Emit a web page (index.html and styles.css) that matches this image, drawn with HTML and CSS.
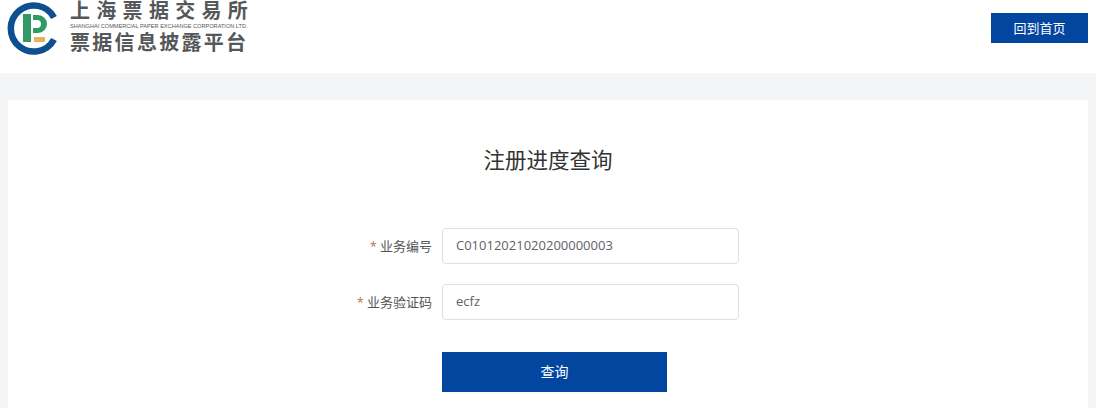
FILE: index.html
```html
<!DOCTYPE html>
<html lang="zh-CN">
<head>
    <meta charset="UTF-8">
    <title>注册进度查询</title>
    <link rel="stylesheet" href="styles.css">
</head>
<body>

    <div class="header">
        <div class="logo">
            <svg class="logo-mark" width="54" height="54" viewBox="0 0 54 54">
                <path d="M47 16.5A23 23 0 1 0 47 38.5" fill="none" stroke="#0d4f8f" stroke-width="6.5"/>
                <rect x="16" y="13" width="8" height="28" fill="#2f9a63"/>
                <path d="M26 14h5a9 9 0 0 1 0 18h-5v-5h4a4 4 0 0 0 0-8h-4z" fill="#2f9a63"/>
                <rect x="27" y="36" width="11" height="5" fill="#e3b35c"/>
            </svg>
            <div class="logo-text">
                <div class="logo-name">上海票据交易所</div>
                <div class="logo-en">SHANGHAI COMMERCIAL PAPER EXCHANGE CORPORATION LTD.</div>
                <div class="logo-sub">票据信息披露平台</div>
            </div>
        </div>
        <a class="home-btn">回到首页</a>
    </div>

    <div class="card">
        <h2>注册进度查询</h2>

        <div class="form-row">
            <label><span class="star">*</span>业务编号</label>
            <div class="input-box">C01012021020200000003</div>
        </div>

        <div class="form-row">
            <label><span class="star">*</span>业务验证码</label>
            <div class="input-box">ecfz</div>
        </div>

        <div class="btn-row">
            <button class="search-btn">查询</button>
        </div>
    </div>

</body>
</html>
```

FILE: styles.css
```css
body {
    font-family: "Open Sans", "Noto Sans CJK SC", sans-serif;
    margin: 0;
    padding: 0;
    background-color: #f3f5f6;
    height: 408px;
    overflow: hidden;
}

.header {
    display: flex;
    justify-content: space-between;
    align-items: flex-start;
    height: 73px;
    background: white;
    padding-right: 8px;
}

.logo {
    display: flex;
    padding-left: 7px;
}

.logo-mark {
    display: block;
    margin-top: 1px;
}

.logo-text {
    margin-left: 9px;
    width: 180px;
    font-family: "Liberation Sans", "Noto Sans CJK SC", sans-serif;
    color: #55585a;
    font-weight: bold;
    white-space: nowrap;
}

.logo-name {
    font-size: 20px;
    line-height: 23px;
    letter-spacing: 6.3px;
}

.logo-en {
    font-size: 5.6px;
    line-height: 7px;
    font-weight: normal;
}

.logo-sub {
    font-size: 20px;
    line-height: 23px;
    letter-spacing: 2.3px;
    margin-top: 2px;
}

.home-btn {
    display: block;
    width: 97px;
    height: 30px;
    line-height: 30px;
    margin-top: 13px;
    text-align: center;
    font-size: 13px;
    color: white;
    background-color: #03469f;
}

.card {
    background: white;
    margin: 27px 8px 0;
    height: 308px;
    overflow: hidden;
}

h2 {
    font-size: 21.5px;
    font-weight: normal;
    line-height: 30px;
    color: #333;
    text-align: center;
    margin: 45px 0 53px;
}

.form-row {
    display: flex;
    align-items: center;
    height: 36px;
    margin-bottom: 20px;
    font-size: 13px;
    color: #555;
}

label {
    width: 434px;
    text-align: right;
    padding: 0 10px 2px 0;
    box-sizing: border-box;
}

.star {
    margin-right: 3px;
    color: #c0705a;
}

.input-box {
    box-sizing: border-box;
    width: 297px;
    height: 36px;
    line-height: 32px;
    padding-left: 13px;
    font-size: 13px;
    color: #606266;
    border: 1px solid #dcdfe6;
    border-radius: 4px;
}

.btn-row {
    padding-left: 434px;
    margin-top: 32px;
}

.search-btn {
    display: block;
    width: 225px;
    height: 40px;
    border: none;
    padding: 0 0 2px;
    font-family: inherit;
    font-size: 14px;
    color: white;
    background-color: #03469f;
}
```
